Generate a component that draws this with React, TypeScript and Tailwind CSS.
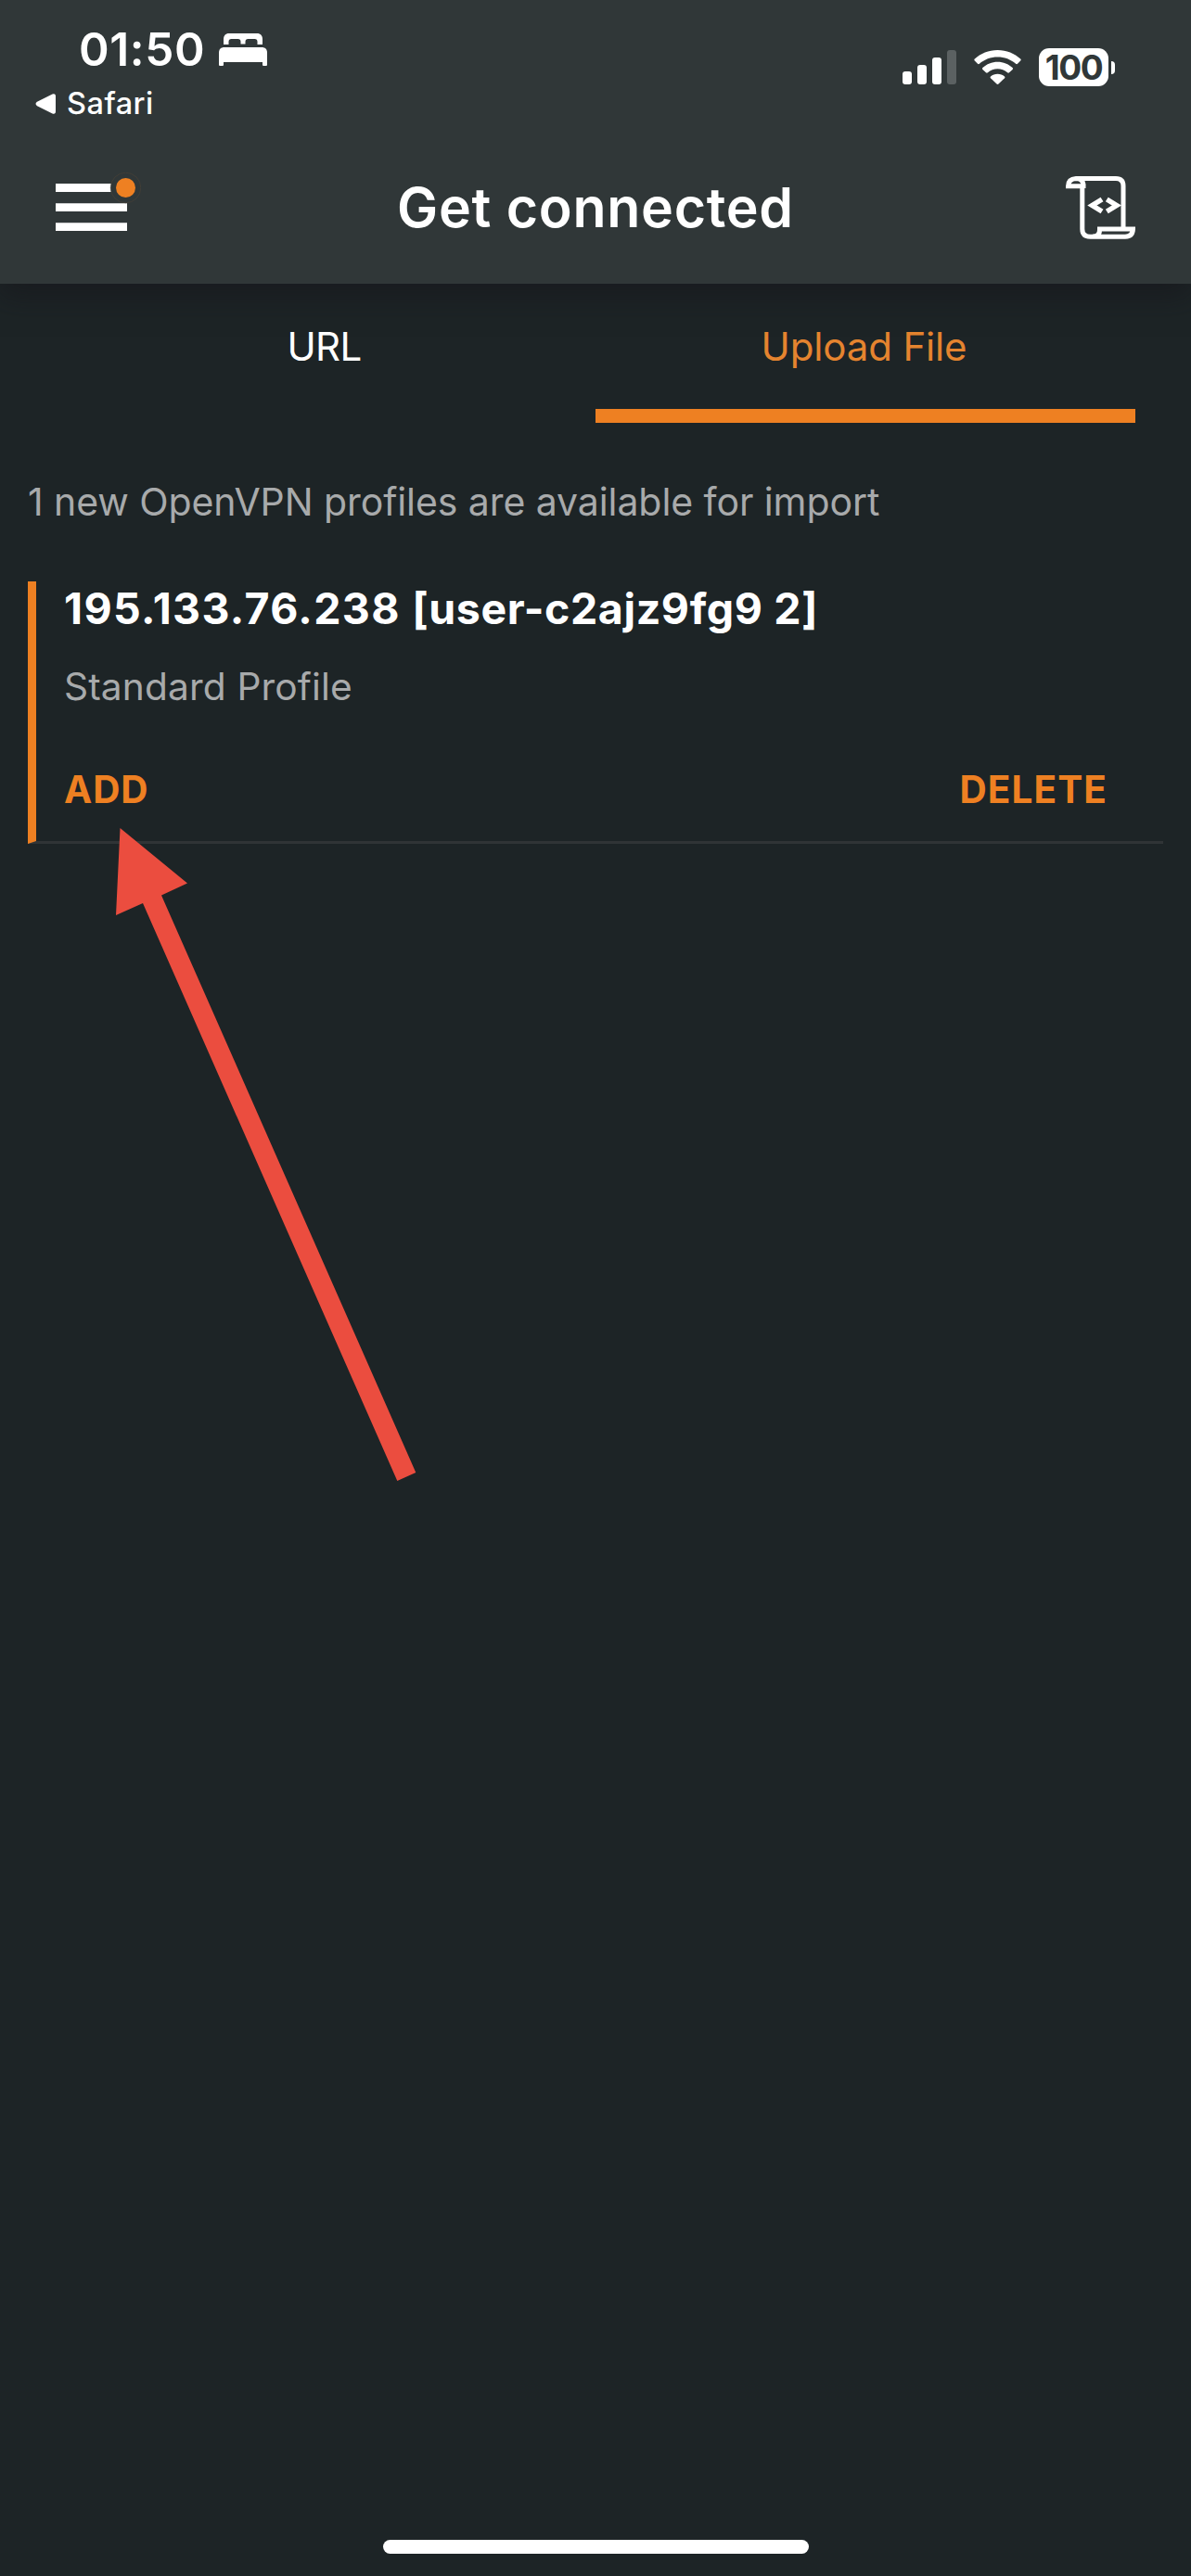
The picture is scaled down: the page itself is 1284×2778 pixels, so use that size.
import React from "react";

function BedIcon() {
  return (
    <svg width="52" height="35" viewBox="0 0 52 35" fill="#fff" aria-hidden="true">
      <path d="M5 12V6.5C5 2.5 7 0 11 0H41C45 0 47 2.500 47 6.500V12H41.500V9C41.500 7 40.500 6 38.500 6H31.500C29.500 6 28.500 7 28.500 9V11.500H23.500V9C23.500 7 22.500 6 20.500 6H13.500C11.500 6 10.500 7 10.500 9V12Z" />
      <path d="M0 21C0 17 2 15 6 15H46C50 15 52 17 52 21V33.500C52 34.500 51.500 35 50.500 35H48.500C47.500 35 47 34.500 47 33.500V31H5V33.500C5 34.500 4.500 35 3.500 35H1.500C.5 35 0 34.500 0 33.500Z" />
    </svg>
  );
}

function SignalIcon() {
  return (
    <svg width="58" height="37" viewBox="0 0 58 37" fill="#fff" aria-hidden="true">
      <rect x="0" y="23" width="10" height="14" rx="3" />
      <rect x="16" y="16" width="10" height="21" rx="3" />
      <rect x="32" y="8" width="10" height="29" rx="3" />
      <rect x="48" y="0" width="10" height="37" rx="3" fill="#5b6162" />
    </svg>
  );
}

function WifiIcon() {
  return (
    <svg width="51" height="37" viewBox="0 0 51 37" fill="#fff" aria-hidden="true">
      <path d="M25.500 0C35.200 0 43.700 3.600 50.200 9.600Q51.200 10.600 50.200 11.600L47 14.800Q46.100 15.600 45.100 14.800C39.700 10 33 7.500 25.500 7.500S11.300 10 5.900 14.800Q4.900 15.600 4 14.800L.8 11.600Q-.2 10.600 .8 9.600C7.300 3.600 15.800 0 25.500 0Z" />
      <path d="M25.500 12.700C31.700 12.700 37.300 15 41.600 19Q42.600 20 41.600 20.900L38 24.300Q37.100 25.100 36.100 24.300C33.100 21.700 29.500 20.200 25.500 20.200S17.900 21.700 14.900 24.300Q13.900 25.100 13 24.300L9.400 20.900Q8.400 20 9.400 19C13.700 15 19.300 12.700 25.500 12.700Z" />
      <path d="M25.500 25.700C28.400 25.700 31 26.700 33 28.400Q33.900 29.300 33 30.200L26.500 36.500Q25.500 37.300 24.500 36.500L18 30.200Q17.100 29.300 18 28.400C20 26.700 22.600 25.700 25.500 25.700Z" />
    </svg>
  );
}

function MenuIcon() {
  return (
    <svg width="92" height="64" viewBox="0 0 92 64" aria-hidden="true">
      <path d="M0 12H77V21H0ZM0 33.200H77V42H0ZM0 54.300H77V63H0Z" fill="#fff" />
      <circle cx="75.500" cy="16.500" r="16.300" fill="#303738" stroke="#4d4338" strokeWidth=".6" />
      <circle cx="75.500" cy="16.500" r="10.500" fill="#ee8022" />
    </svg>
  );
}

function ScriptIcon() {
  return (
    <svg width="75" height="68" viewBox="0 0 75 68" fill="none" stroke="#fff" strokeWidth="5" aria-hidden="true">
      <path d="M11 2.500H54Q62 2.500 62 10.500V56" />
      <path d="M17.800 10V57Q17.800 65.300 26.500 65.300H64Q72 65.300 72.500 57H36.500V58Q36.500 65 29 65" />
      <path d="M19 13V9Q18 2.500 11 2.500Q2.500 3 2.500 10.800H20" />
      <path d="M39 25L28.500 31.500L39 38M44.300 25L54.800 31.500L44.300 38" strokeWidth="5.500" />
    </svg>
  );
}

function StatusBar() {
  return (
    <div className="flex h-[140px] items-start justify-between pr-[82px] text-white">
      <div className="pt-[23px]">
        <div className="flex h-[60px] items-center pl-[85px]">
          <span className="w-[151px] text-[49.5px] leading-[60px] font-semibold tracking-[0.63px]">01:50</span>
          <BedIcon />
        </div>
        <div className="flex h-[57px] items-center pl-[38px]">
          <svg width="22" height="22" viewBox="0 0 22 22" fill="#fff" aria-hidden="true">
            <path d="M2 8.800L18.500 .5Q22 -.6 22 3V19Q22 22.600 18.500 21.500L2 13.200Q-1 11 2 8.800Z" />
          </svg>
          <span className="pl-3 text-[32.5px] leading-[57px] font-medium tracking-[0.47px]">Safari</span>
        </div>
      </div>
      <div className="flex h-[41px] mt-[52px] items-center">
        <SignalIcon />
        <div className="ml-[19px]">
          <WifiIcon />
        </div>
        <div className="ml-[19px] flex items-center gap-[3px]">
          <div className="flex h-[41px] w-[75px] items-center justify-center rounded-[11px] bg-white text-[37px] leading-[41px] font-bold tracking-[-1.4px] text-[#303738]">
            100
          </div>
          <div className="h-[14px] w-1 rounded-r-full bg-white" />
        </div>
      </div>
    </div>
  );
}

function Header() {
  return (
    <header className="relative z-10 h-[306px] bg-[#303738] shadow-[0_12px_30px_rgba(20,18,24,0.5)]">
      <StatusBar />
      <div className="flex items-start justify-between px-[60px] text-white">
        <button className="mt-[46px] w-[92px]" aria-label="Menu">
          <MenuIcon />
        </button>
        <h1 className="mt-[50px] text-[59px] leading-[68px] font-semibold tracking-[0.72px]">Get connected</h1>
        <button className="mt-[50px] flex w-[92px] justify-end" aria-label="Logs">
          <ScriptIcon />
        </button>
      </div>
    </header>
  );
}

function Tab({ label, active }: { label: string; active?: boolean }) {
  return (
    <button
      className={
        active
          ? "h-[150px] border-b-[15px] border-[#ee8022] pr-[3px] text-[42px] leading-[60px] tracking-[-0.15px] text-[#e5842f]"
          : "h-[150px] border-b-[15px] border-transparent pr-[3px] text-[42px] leading-[60px] tracking-[-0.6px] text-white"
      }
    >
      {label}
    </button>
  );
}

function ProfileCard() {
  return (
    <section className="mx-[30px] mt-14 h-[283px] border-b-[3px] border-l-[9px] border-b-[#303436] border-l-[#ee8022] pl-[30px]">
      <h2 className="text-[46.5px] leading-[58px] font-bold tracking-[0.6px] text-white">
        <span className="tracking-[1.35px]">195.133.76.238 </span>[user-c2ajz9fg9 2]
      </h2>
      <p className="mt-[26px] text-[40.7px] leading-[60px] tracking-[0.13px] text-[#a8aaab]">Standard Profile</p>
      <div className="mt-[51px] flex justify-between pr-[60px] text-[40.5px] leading-[60px] font-bold text-[#ee8022]">
        <button className="tracking-[0.9px]">ADD</button>
        <button className="tracking-[1.1px]">DELETE</button>
      </div>
    </section>
  );
}

export default function App() {
  return (
    <div className="relative flex h-[2778px] w-[1284px] flex-col overflow-hidden bg-[#1d2426] font-['Inter',sans-serif]">
      <Header />
      <nav className="grid grid-cols-2 px-[60px]">
        <Tab label="URL" />
        <Tab label="Upload File" active />
      </nav>
      <p className="mt-[55px] pl-[30px] text-[41px] leading-[60px] tracking-[-0.08px] text-[#a8aaab]">
        1 new OpenVPN profiles are available for import
      </p>
      <ProfileCard />
      <div className="mx-auto mt-auto mb-6 h-[15px] w-[459px] rounded-full bg-white" />
      <svg
        className="pointer-events-none absolute top-[893px] left-[125px]"
        width="324"
        height="705"
        viewBox="125 893 324 705"
        aria-hidden="true"
      >
        <path d="M129.500 893L202 952.500L174 965.500L448.300 1588L428.300 1597L154 974L125 987Z" fill="#eb4d3f" />
      </svg>
    </div>
  );
}
